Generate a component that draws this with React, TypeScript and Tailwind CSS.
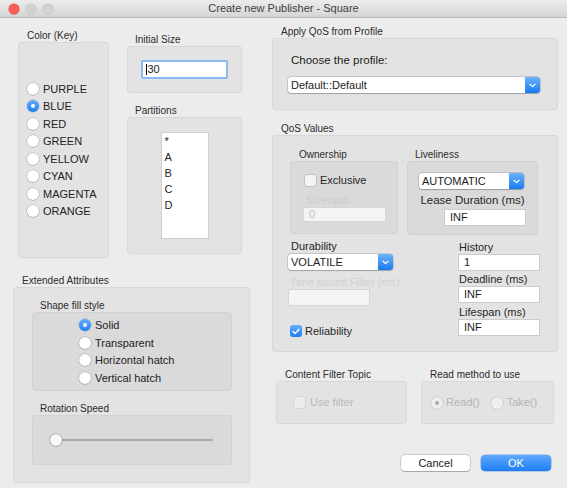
import React from 'react';

type Kids = { children?: React.ReactNode; className?: string };

const Label: React.FC<Kids> = ({ children, className = '' }) => (
	<div className={`h-[12px] whitespace-nowrap text-[10px] leading-[12px] text-[#2b2b2b] ${className}`}>
		{children}
	</div>
);

const Panel: React.FC<Kids> = ({ children, className = '' }) => (
	<div className={`rounded-[3px] border border-[#d8d8d8] bg-[#e3e3e3] ${className}`}>{children}</div>
);

const Inner: React.FC<Kids> = ({ children, className = '' }) => (
	<div className={`rounded-[3px] border border-[#d2d2d2] bg-[#dadada] ${className}`}>{children}</div>
);

const Radio: React.FC<{ checked?: boolean; disabled?: boolean }> = ({ checked, disabled }) => {
	if (disabled) {
		return (
			<span className="flex h-[12px] w-[12px] shrink-0 items-center justify-center rounded-full bg-[#efefef] shadow-[0_0_0_0.5px_rgba(0,0,0,0.18)]">
				{checked && <span className="h-[4px] w-[4px] rounded-full bg-[#a9a9a9]" />}
			</span>
		);
	}
	if (checked) {
		return (
			<span className="flex h-[12px] w-[12px] shrink-0 items-center justify-center rounded-full bg-linear-to-b from-[#62acfc] to-[#1b7df4] shadow-[0_0_0_0.5px_rgba(0,60,160,0.35)]">
				<span className="h-[4px] w-[4px] rounded-full bg-white" />
			</span>
		);
	}
	return (
		<span className="h-[12px] w-[12px] shrink-0 rounded-full bg-white shadow-[0_0_0_0.5px_rgba(0,0,0,0.22),0_0.5px_1px_rgba(0,0,0,0.18)]" />
	);
};

const RadioRow: React.FC<{ label: string; checked?: boolean }> = ({ label, checked }) => (
	<div className="flex h-[17.5px] items-center">
		<Radio checked={checked} />
		<span className="ml-[4px] text-[11px] text-[#222]">{label}</span>
	</div>
);

const Chevron = () => (
	<svg width="7" height="5" viewBox="0 0 7 5" fill="none">
		<path d="M1 1.2 L3.5 3.6 L6 1.2" stroke="white" strokeWidth="1.2" strokeLinecap="round" strokeLinejoin="round" />
	</svg>
);

const Select: React.FC<{ value: string; className?: string }> = ({ value, className = '' }) => (
	<div className={`flex h-[16px] rounded-[3px] bg-white shadow-[0_0_0_0.5px_rgba(0,0,0,0.22),0_0.5px_1px_rgba(0,0,0,0.2)] ${className}`}>
		<div className="flex-1 whitespace-nowrap pl-[3px] text-[11px] leading-[16px] text-[#1c1c1c]">{value}</div>
		<div className="flex w-[15px] items-center justify-center rounded-r-[3px] bg-linear-to-b from-[#6ab3fb] to-[#1479f1]">
			<Chevron />
		</div>
	</div>
);

const Input: React.FC<{ value?: string; className?: string; disabled?: boolean }> = ({
	value = '',
	className = '',
	disabled
}) => (
	<div
		className={`border pl-[5px] text-[11px] ${
			disabled ? 'border-[#d6d6d6] bg-[#f4f4f4] text-[#c4c4c4]' : 'border-[#cbcbcb] bg-white text-[#1c1c1c]'
		} ${className}`}
	>
		{value}
	</div>
);

const Check: React.FC<{ checked?: boolean; disabled?: boolean }> = ({ checked, disabled }) =>
	checked ? (
		<span className="flex h-[12px] w-[12px] shrink-0 items-center justify-center rounded-[3px] bg-linear-to-b from-[#62acfc] to-[#1b7df4]">
			<svg width="8" height="7" viewBox="0 0 8 7" fill="none">
				<path d="M1 3.6 L3 5.6 L7 1.2" stroke="white" strokeWidth="1.4" strokeLinecap="round" strokeLinejoin="round" />
			</svg>
		</span>
	) : (
		<span
			className={`h-[11px] w-[11px] shrink-0 rounded-[2px] ${
				disabled ? 'bg-[#ececec] shadow-[0_0_0_0.5px_rgba(0,0,0,0.12)]' : 'bg-[#f3f3f3] shadow-[0_0_0_0.5px_rgba(0,0,0,0.2)]'
			}`}
		/>
	);

const TitleBar = () => (
	<div className="grid h-[18px] grid-cols-[1fr_auto_1fr] items-center border-b border-[#b9b9b9] bg-linear-to-b from-[#ececec] to-[#d5d5d5]">
		<div className="flex items-center gap-[7px] pl-[9px]">
			<span className="h-[10px] w-[10px] rounded-full bg-[#fc5f57] shadow-[0_0_0_0.5px_#df4a43]" />
			<span className="h-[10px] w-[10px] rounded-full bg-[#d3d3d3] shadow-[0_0_0_0.5px_#bdbdbd]" />
			<span className="h-[10px] w-[10px] rounded-full bg-[#d3d3d3] shadow-[0_0_0_0.5px_#bdbdbd]" />
		</div>
		<div className="text-[11px] text-[#404040]">Create new Publisher - Square</div>
		<div />
	</div>
);

const colors = ['PURPLE', 'BLUE', 'RED', 'GREEN', 'YELLOW', 'CYAN', 'MAGENTA', 'ORANGE'];
const partitions = ['*', 'A', 'B', 'C', 'D'];
const fills = ['Solid', 'Transparent', 'Horizontal hatch', 'Vertical hatch'];

const LeftColumn = () => (
	<div className="ml-[13px] flex w-[237px] flex-col">
		<div className="flex items-start pl-[5px]">
			<div className="pt-[12px]">
				<Label className="pl-[9px]">Color (Key)</Label>
				<Panel className="flex h-[216px] w-[91px] flex-col justify-center pl-[8px]">
					{colors.map((c) => (
						<RadioRow key={c} label={c} checked={c === 'BLUE'} />
					))}
				</Panel>
			</div>
			<div className="ml-[18px] pt-[16px]">
				<Label className="pl-[8px]">Initial Size</Label>
				<Panel className="flex h-[47px] w-[115px] items-center justify-center">
					<div className="flex h-[19px] w-[87px] items-center rounded-[2px] border-[2px] border-[#8db8f2] bg-white pl-[3px] text-[11px] text-[#1c1c1c]">
						<span className="mr-[0.5px] h-[11px] w-[1px] bg-black" />
						30
					</div>
				</Panel>
				<Label className="mt-[12px] pl-[8px]">Partitions</Label>
				<Panel className="flex h-[137px] w-[115px] items-center justify-center">
					<div className="h-[107px] w-[48px] border border-[#cfcfcf] bg-white pl-[3px]">
						{partitions.map((p) => (
							<div key={p} className="h-[16px] text-[11px] leading-[16px] text-[#262626]">
								{p}
							</div>
						))}
					</div>
				</Panel>
			</div>
		</div>
		<Label className="mt-[17px] pl-[9px]">Extended Attributes</Label>
		<Panel className="h-[196px] w-[237px] pl-[18px] pt-[12px]">
			<Label className="pl-[8px]">Shape fill style</Label>
			<Inner className="flex h-[79px] w-[200px] flex-col justify-center pl-[46px]">
				{fills.map((f) => (
					<RadioRow key={f} label={f} checked={f === 'Solid'} />
				))}
			</Inner>
			<Label className="mt-[12px] pl-[8px]">Rotation Speed</Label>
			<Inner className="flex h-[50px] w-[200px] items-center pl-[17px] pr-[18px]">
				<div className="relative flex h-[12px] flex-1 items-center">
					<div className="absolute left-[6px] right-0 h-[2px] rounded-full bg-[#a9a9a9]" />
					<span className="relative h-[12px] w-[12px] rounded-full bg-[#f9f9f9] shadow-[0_0_0_0.5px_rgba(0,0,0,0.25),0_0.5px_1.5px_rgba(0,0,0,0.25)]" />
				</div>
			</Inner>
		</Panel>
	</div>
);

const FieldLabel: React.FC<Kids> = ({ children, className = '' }) => (
	<div className={`h-[13px] whitespace-nowrap text-[11px] leading-[13px] text-[#262626] ${className}`}>{children}</div>
);

const RightColumn = () => (
	<div className="ml-[22px] flex w-[286px] flex-col pt-[8px]">
		<Label className="pl-[9px]">Apply QoS from Profile</Label>
		<Panel className="h-[72px] pl-[15px] pt-[14px]">
			<div className="h-[14px] pl-[3px] text-[11.5px] leading-[14px] text-[#1c1c1c]">Choose the profile:</div>
			<Select value="Default::Default" className="mt-[10px] w-[252px] text-[11.5px]" />
		</Panel>

		<Label className="mt-[13px] pl-[9px]">QoS Values</Label>
		<Panel className="h-[217px] pl-[15px] pr-[17px] pt-[13px]">
			<div className="ml-[2px] flex">
				<div>
					<Label className="pl-[9px]">Ownership</Label>
					<Inner className="h-[73px] w-[108px] px-[12px] pt-[12px]">
						<div className="flex h-[12px] items-center pl-[2px]">
							<Check />
							<span className="ml-[4px] text-[11px] text-[#262626]">Exclusive</span>
						</div>
						<div className="mt-[8px] h-[12px] pl-[3px] text-[11.5px] leading-[12px] text-[#cdcdcd]">Strength</div>
						<Input value="0" disabled className="mt-[1px] h-[15px] w-[83px] leading-[13px]" />
					</Inner>
				</div>
				<div className="ml-[9px]">
					<Label className="pl-[8px]">Liveliness</Label>
					<Inner className="flex h-[74px] w-[131px] flex-col px-[11px] pt-[11px]">
						<Select value="AUTOMATIC" className="w-[105px]" />
						<div className="mt-[4px] h-[14px] text-center text-[11.5px] leading-[14px] text-[#262626]">
							Lease Duration (ms)
						</div>
						<Input value="INF" className="mt-[2px] h-[17px] w-[82px] self-end leading-[15px]" />
					</Inner>
				</div>
			</div>
			<div className="flex">
				<div className="mt-[5px] flex flex-col">
					<FieldLabel className="pl-[3px]">Durability</FieldLabel>
					<Select value="VOLATILE" className="mt-[1px] w-[105px]" />
					<FieldLabel className="mt-[6px] pl-[2px] text-[#d2d2d2]">Time based Filter (ms)</FieldLabel>
					<Input disabled className="h-[17px] w-[82px]" />
					<div className="mt-[19px] flex h-[12px] items-center pl-[2px]">
						<Check checked />
						<span className="ml-[3px] text-[11px] text-[#262626]">Reliability</span>
					</div>
				</div>
				<div className="ml-auto mt-[6px] flex w-[82px] flex-col">
					<FieldLabel className="pl-[1px]">History</FieldLabel>
					<Input value="1" className="h-[17px] leading-[15px]" />
					<FieldLabel className="mt-[2px] pl-[1px]">Deadline (ms)</FieldLabel>
					<Input value="INF" className="h-[17px] leading-[15px]" />
					<FieldLabel className="mt-[3px] pl-[1px]">Lifespan (ms)</FieldLabel>
					<Input value="INF" className="h-[17px] leading-[15px]" />
				</div>
			</div>
		</Panel>

		<div className="mt-[17px] flex pl-[4px]">
			<div>
				<Label className="pl-[9px]">Content Filter Topic</Label>
				<Panel className="flex h-[43px] w-[131px] items-center pl-[17px]">
					<Check disabled />
					<span className="ml-[5px] text-[11px] text-[#b9b9b9]">Use filter</span>
				</Panel>
			</div>
			<div className="ml-[14px]">
				<Label className="pl-[9px]">Read method to use</Label>
				<Panel className="flex h-[43px] w-[133px] items-center pl-[9px]">
					<Radio checked disabled />
					<span className="ml-[3px] text-[11px] text-[#b4b4b4]">Read()</span>
					<span className="ml-[11px]">
						<Radio disabled />
					</span>
					<span className="ml-[4px] text-[11px] text-[#b4b4b4]">Take()</span>
				</Panel>
			</div>
		</div>

		<div className="mt-[31px] flex justify-end gap-[11px] pr-[7px]">
			<button className="h-[16px] w-[69px] rounded-[4px] bg-white text-[11px] leading-[16px] text-[#1c1c1c] shadow-[0_0_0_0.5px_rgba(0,0,0,0.25),0_0.5px_1px_rgba(0,0,0,0.2)]">
				Cancel
			</button>
			<button className="h-[16px] w-[70px] rounded-[4px] bg-linear-to-b from-[#5eaafd] to-[#1a7cf6] text-[11px] leading-[16px] text-white shadow-[0_0_0_0.5px_rgba(0,70,180,0.4)]">
				OK
			</button>
		</div>
	</div>
);

export default function App() {
	return (
		<div className="flex h-[488px] w-[571px] bg-white font-['Liberation_Sans',Arial,sans-serif]">
			<div className="flex h-full w-[567px] flex-col bg-[#ececec]">
				<TitleBar />
				<div className="flex">
					<LeftColumn />
					<RightColumn />
				</div>
			</div>
		</div>
	);
}
